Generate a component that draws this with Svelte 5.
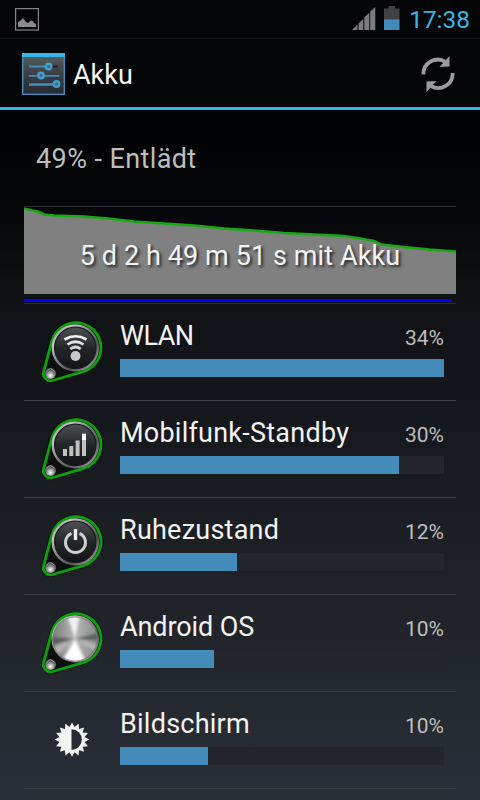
<script lang="ts">
  type Item = { icon: string; name: string; percent: number; bar: number };

  const time = '17:38';
  const level = 49;
  const uptime = '5 d 2 h 49 m 51 s mit Akku';

  // bar = width in px, the first item fills the whole track
  const items: Item[] = [
    { icon: 'wifi', name: 'WLAN', percent: 34, bar: 324 },
    { icon: 'cell', name: 'Mobilfunk-Standby', percent: 30, bar: 279 },
    { icon: 'idle', name: 'Ruhezustand', percent: 12, bar: 117 },
    { icon: 'os', name: 'Android OS', percent: 10, bar: 94 },
    { icon: 'screen', name: 'Bildschirm', percent: 10, bar: 88 }
  ];

  const history =
    '0,1.5 8,3.5 14,4.5 20,7.5 30,8.5 60,9.5 84,11.5 110,14.5 140,16.5 170,18.5 200,21.5 230,23.5 260,26 290,27.5 320,29 336,31.5 350,34 357,37.5 380,40 405,42.5 432,44.5';

  // sun with 16 teeth around the given centre
  function sun(cx: number, cy: number) {
    const pts: string[] = [];
    for (let i = 0; i < 32; i++) {
      const r = i % 2 === 0 ? 17.2 : 12.8;
      const a = (i * Math.PI) / 16 - Math.PI / 2;
      pts.push(`${(cx + r * Math.cos(a)).toFixed(2)},${(cy + r * Math.sin(a)).toFixed(2)}`);
    }
    return pts.join(' ');
  }
</script>

<div class="phone">
  <header class="status">
    <svg class="picture" width="24" height="23" viewBox="0 0 24 23">
      <rect x=".6" y=".6" width="22.8" height="21.4" fill="none" stroke="#858585" stroke-width="1.2" />
      <path d="M3 19V14L5 13L8 10L11 14L13 15L16 12.5L18 13L19 15L21 16V19Z" fill="#8a8a8a" />
    </svg>
    <svg class="signal" width="24" height="23" viewBox="0 0 24 23">
      <path d="M0 23L5.500 17.500V23ZM6.500 23V16.500L11.300 11.700V23ZM12.300 23V10.500L17.300 5.700V23ZM18.200 23V4.500L23.300 0V23Z" fill="#7d7d7d" />
    </svg>
    <svg class="battery" width="16" height="24" viewBox="0 0 16 24">
      <path d="M0 2.500H4.500V0H11V2.500H15.500V14H0Z" fill="#404144" />
      <rect y="13.500" width="15.500" height="10.500" fill="#438bb8" />
      <path d="M1 13.500H15" stroke="#a0603c" stroke-width="1" stroke-dasharray="1 2" />
    </svg>
    <span class="clock">{time}</span>
  </header>

  <div class="actionbar">
    <svg class="settings" width="43" height="42" viewBox="0 0 43 42">
      <defs>
        <linearGradient id="panel" x1="0" y1="0" x2="0" y2="1">
          <stop offset="0" stop-color="#5a5f5f" />
          <stop offset=".5" stop-color="#3b3f45" />
          <stop offset="1" stop-color="#252a33" />
        </linearGradient>
      </defs>
      <rect x=".7" y=".7" width="41.600" height="40.600" fill="url(#panel)" stroke="#438bb8" stroke-width="1.400" />
      <rect width="43" height="4" fill="#33b5e5" />
      <path d="M29 13.500H36" stroke="#20242a" stroke-width="2" />
      <path d="M7 13.500H25M7 22.800H37" stroke="#438bb8" stroke-width="1.800" />
      <path d="M7 31.500H33" stroke="#438bb8" stroke-width="2.600" />
      <g fill="#50606a" stroke="#3b9fd0" stroke-width="2.400">
        <circle cx="26.500" cy="13.500" r="2.800" />
        <circle cx="19" cy="22.500" r="2.800" />
        <circle cx="34.500" cy="31" r="2.800" />
      </g>
    </svg>
    <h1>Akku</h1>
    <svg class="refresh" width="34" height="36" viewBox="0 0 34 36">
      <g fill="none" stroke="#9b9c9e" stroke-width="3.800">
        <path d="M2.400 18.500A14.300 14.300 0 0 1 24 5.700" />
        <path d="M31.600 17A14.300 14.300 0 0 1 10 30" />
      </g>
      <path d="M28.500 0V10.500L18.500 11Z" fill="#9b9c9e" />
      <path d="M5.500 36V25.500L15.500 25Z" fill="#9b9c9e" />
    </svg>
  </div>

  <main>
    <div class="summary">{level}% - Entlädt</div>

    <div class="history">
      <svg class="chart" width="432" height="87" viewBox="0 0 432 87">
        <polygon points="{history} 432,87 0,87" fill="#808080" />
        <polyline points={history} fill="none" stroke="#18a814" stroke-width="2.600" />
      </svg>
      <div class="charging"></div>
      <div class="uptime">{uptime}</div>
    </div>

    <!-- shared paint for the round knobs -->
    <svg class="paint" width="0" height="0">
      <defs>
        <linearGradient id="rim" x1="0" y1="0" x2="1" y2="1">
          <stop offset="0" stop-color="#777" />
          <stop offset=".22" stop-color="#c5c5c5" />
          <stop offset=".5" stop-color="#77797a" />
          <stop offset=".68" stop-color="#55575a" />
          <stop offset="1" stop-color="#bcbcbc" />
        </linearGradient>
        <linearGradient id="face" x1="0" y1="0" x2="0" y2="1">
          <stop offset="0" stop-color="#4e5154" />
          <stop offset=".5" stop-color="#24272a" />
          <stop offset="1" stop-color="#111316" />
        </linearGradient>
        <linearGradient id="steel" x1="0" y1="0" x2="1" y2="0">
          <stop offset="0" stop-color="#7c7e7e" />
          <stop offset=".5" stop-color="#b5b5b5" />
          <stop offset="1" stop-color="#868889" />
        </linearGradient>
        <radialGradient id="bolt" cx=".5" cy=".7" r=".6">
          <stop offset="0" stop-color="#fff" />
          <stop offset=".4" stop-color="#aaa" />
          <stop offset="1" stop-color="#36383a" />
        </radialGradient>
        <clipPath id="knob"><circle cx="75" cy="44" r="22.500" /></clipPath>
        <filter id="soft"><feGaussianBlur stdDeviation="1.500" /></filter>
      </defs>
    </svg>

    <ul>
      {#each items as item}
        <li>
          <svg class="icon" width="96" height="96" viewBox="24 0 96 96">
            {#if item.icon === 'screen'}
              <polygon points={sun(72, 47.6)} fill="#f3f3f3" />
              <path d="M71.500 37.300A10.300 10.300 0 0 1 71.500 57.900Z" fill="#252b32" />
            {:else}
              <path class="shadow" d="M51.850 37.200A25 25 0 1 1 83 67.700L52.700 76.500A7.300 7.300 0 0 1 43.650 67.600Z" />
              <path class="plate" d="M51.850 37.200A25 25 0 1 1 83 67.700L52.700 76.500A7.300 7.300 0 0 1 43.650 67.600Z" />
              <circle cx="75.300" cy="43.900" r="23.700" fill="url(#rim)" />
              <circle cx="50.500" cy="69.300" r="5.600" fill="url(#bolt)" />
              <path d="M46.500 67.500Q50.500 62 54.500 67.500" fill="none" stroke="#999" />
              {#if item.icon === 'os'}
                <g clip-path="url(#knob)">
                  <rect x="52" y="21" width="46" height="46" fill="url(#steel)" />
                  <g filter="url(#soft)">
                    <path d="M75 44L50 42V50ZM75 44L100 38V45Z" fill="#595b5c" />
                    <path d="M75 44L67 20H80Z" fill="#f1f1f1" />
                    <path d="M75 44L60 70H87Z" fill="#fff" />
                    <path d="M75 44L54 62V52ZM75 44L98 58V50Z" fill="#b5b5b5" />
                  </g>
                </g>
                <circle cx="75" cy="44" r="22" fill="none" stroke="#777" stroke-width=".8" />
              {:else}
                <circle cx="75.300" cy="43.900" r="20.700" fill="url(#face)" stroke="#191b1e" stroke-width="1.200" />
              {/if}
              {#if item.icon === 'wifi'}
                <circle cx="75.500" cy="52" r="5" fill="#c9c9c9" />
                <g fill="none" stroke-width="2.700">
                  <path d="M64.500 35.500Q75.500 29 86.500 35.500" stroke="#f2f2f2" />
                  <path d="M67.500 40.500Q75.500 35 83.500 40.500" stroke="#e2e2e2" />
                  <path d="M70.300 45Q75.500 41 80.700 45" stroke="#d5d5d5" />
                </g>
              {:else if item.icon === 'cell'}
                <path d="M63 48H67V55H63ZM69.300 45H73.300V55H69.300ZM75.600 39.500H79.600V55H75.600ZM82 32.500H86V55H82Z" fill="#c0c0c0" />
                <path d="M82 33H86V39H82Z" fill="#fff" />
              {:else if item.icon === 'idle'}
                <path d="M71.500 35.300A10 10 0 1 0 79.500 35.300" fill="none" stroke="#cfcfcf" stroke-width="3" />
                <path d="M75.500 31V42" stroke="#eee" stroke-width="3.400" />
              {/if}
            {/if}
          </svg>
          <div class="info">
            <div class="label">
              <span class="name {item.icon}">{item.name}</span>
              <span class="percent">{item.percent}%</span>
            </div>
            <div class="track"><div class="fill" style="width: {item.bar}px"></div></div>
          </div>
        </li>
      {/each}
    </ul>
  </main>
</div>

<style>
  :global(body) {
    background: #000;
  }

  .phone {
    width: 480px;
    height: 800px;
    overflow: hidden;
    box-sizing: border-box;
    display: flex;
    flex-direction: column;
    font-family: Roboto, sans-serif;
    color: #f3f3f3;
    background: linear-gradient(#000 0, #020304 150px, #090a0d 240px, #101216 310px, #15181c 430px, #1c2025 540px, #22262c 650px, #282c34 760px, #292d35 800px);
  }

  .status {
    height: 39px;
    flex: none;
    display: flex;
    align-items: flex-start;
    box-sizing: border-box;
    padding: 0 10px 0 15px;
    background: #040507;
    border-bottom: 1px solid #15171a;
  }

  .picture {
    margin-top: 8px;
  }

  .signal {
    margin: 7px 8px 0 auto;
  }

  .battery {
    margin: 6px 9px 0 0;
  }

  .clock {
    color: #33b5e5;
    font-size: 24.5px;
    line-height: 40px;
    width: 61px;
    text-align: right;
    white-space: nowrap;
  }

  .actionbar {
    height: 71px;
    flex: none;
    box-sizing: border-box;
    display: flex;
    align-items: center;
    padding: 0 25px 0 22px;
    background: #040507;
    border-bottom: 3px solid #33b5e5;
  }

  .settings {
    margin-top: 2px;
  }

  h1 {
    margin: 3px 0 0 8px;
    font-size: 27px;
    font-weight: 400;
    line-height: 32px;
  }

  .refresh {
    margin: 2px 0 0 auto;
  }

  main {
    padding: 0 24px;
  }

  .summary {
    height: 97px;
    box-sizing: border-box;
    padding-left: 12px;
    border-bottom: 1px solid #2b2d32;
    font-size: 27px;
    line-height: 98px;
    letter-spacing: 0.4px;
    color: #bebebe;
  }

  .history {
    position: relative;
    height: 97px;
    box-sizing: border-box;
    border-bottom: 1px solid #2b2d32;
  }

  .chart {
    display: block;
  }

  .charging {
    width: 428px;
    height: 3px;
    margin-top: 5px;
    background: #0000fe;
  }

  .uptime {
    position: absolute;
    top: 33px;
    left: 0;
    width: 432px;
    text-align: center;
    font-size: 27px;
    line-height: 32px;
    letter-spacing: 0.1px;
    white-space: nowrap;
    text-shadow: 2px 2px 3px #202428;
  }

  .paint {
    position: absolute;
  }

  ul {
    list-style: none;
    margin: 0;
    padding: 0;
  }

  li {
    display: flex;
    height: 96px;
    border-bottom: 1px solid #3c3e42;
  }

  .icon {
    flex: none;
  }

  .shadow {
    fill: none;
    stroke: #000;
    stroke-width: 5px;
    opacity: 0.3;
  }

  .plate {
    fill: #0c0e10;
    stroke: #0ca20a;
    stroke-width: 2.8px;
  }

  .info {
    width: 324px;
    padding-top: 16px;
  }

  .label {
    display: flex;
    justify-content: space-between;
    height: 39px;
  }

  .name {
    font-size: 27px;
    line-height: 32px;
    letter-spacing: 0.24px;
  }

  .name.wifi {
    letter-spacing: -0.5px;
  }

  .name.os {
    letter-spacing: -0.1px;
  }

  .percent {
    font-size: 21px;
    line-height: 36px;
    color: #bebebe;
  }

  .track {
    height: 18px;
    background: #25262b;
  }

  .fill {
    height: 18px;
    background: #438bb8;
  }
</style>
